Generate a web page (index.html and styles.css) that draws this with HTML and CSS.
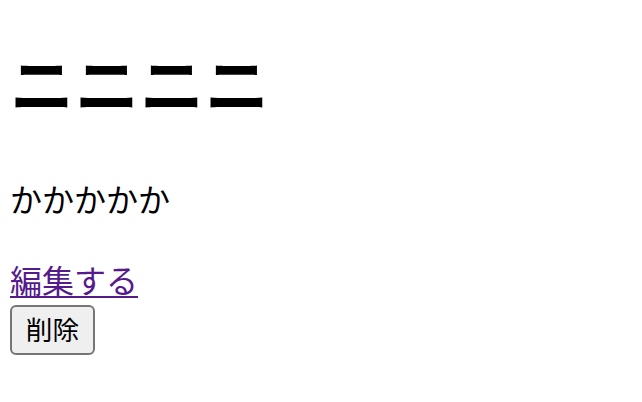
FILE: index.html
```html
<!DOCTYPE html>
<html lang="ja">
<head>
<meta charset="utf-8">
<link rel="stylesheet" href="styles.css">
</head>
<body>
<h1 class="title">ニニニニ</h1>
<p class="body-text">かかかかか</p>
<div class="actions">
  <a class="edit-link" href="#">編集する</a>
  <form class="delete-form"><button type="button" class="delete-btn">削除</button></form>
</div>
</body>
</html>
```
FILE: styles.css
```css
html, body {
  margin: 0;
  padding: 0;
  background: #fff;
}
body {
  padding: 0 10px;
  font-family: "Noto Sans CJK JP", "Noto Sans", sans-serif;
  color: #000;
}
.title {
  margin: 33px 0 45px;
  font-size: 64px;
  line-height: 96px;
  font-weight: bold;
  letter-spacing: 1px;
}
.body-text {
  margin: 0 0 33px;
  font-size: 32px;
  line-height: 48px;
}
.actions {
  display: flex;
  flex-direction: column;
  align-items: flex-start;
  gap: 2px;
}
.edit-link {
  font-size: 32px;
  line-height: 48px;
  color: #551a8b;
  text-decoration: underline;
  text-underline-offset: 3px;
  text-decoration-thickness: 2px;
}
.delete-form {
  margin: 0;
}
.delete-btn {
  width: 85px;
  height: 50px;
  padding: 0 0 3px;
  font-family: "Noto Sans CJK JP", sans-serif;
  font-size: 26.67px;
  color: #000;
  background: #efefef;
  border: 2px solid #767676;
  border-radius: 6px;
}
```
